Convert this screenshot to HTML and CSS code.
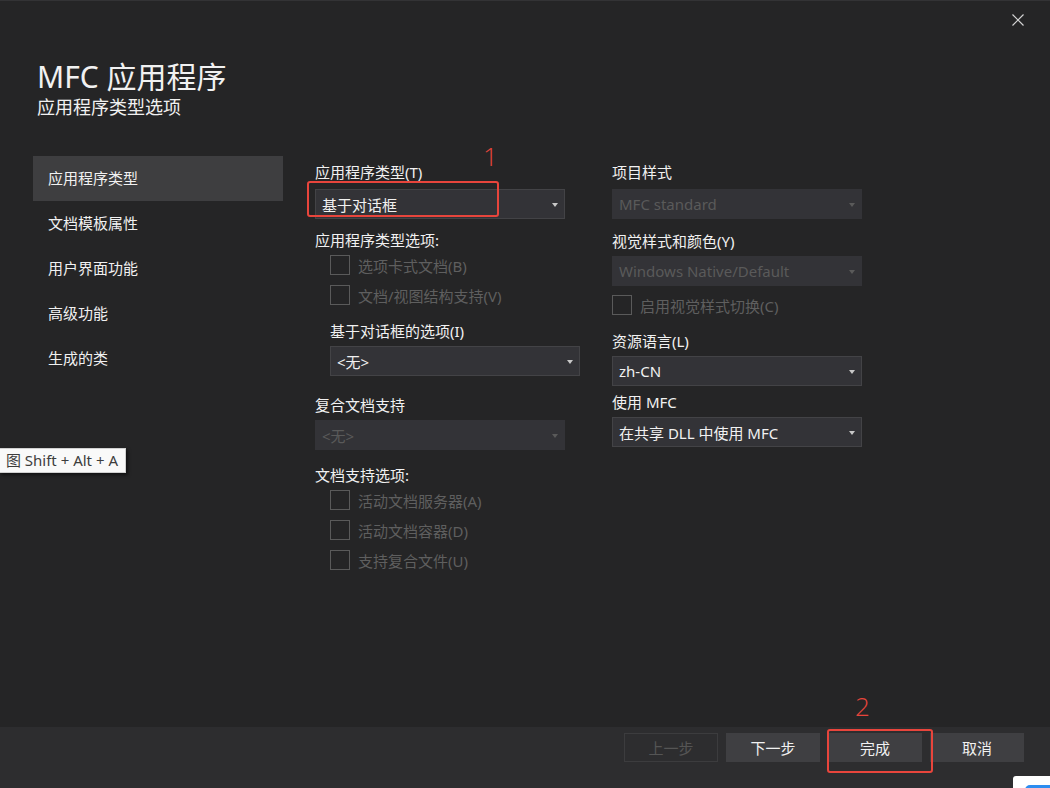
FILE: index.html
```html
<!DOCTYPE html>
<html lang="zh-CN">
<head>
    <meta charset="UTF-8">
    <meta name="viewport" content="width=device-width, initial-scale=1.0">
    <title>MFC 应用程序</title>
    <link rel="stylesheet" href="styles.css">
</head>
<body>
    <div class="dialog">
        <div class="header">
            <div class="titles">
                <h1>MFC 应用程序</h1>
                <h2>应用程序类型选项</h2>
            </div>
            <button class="close-btn" aria-label="关闭">
                <svg width="12" height="12" viewBox="0 0 12 12">
                    <path d="M0.5 0.5L11.5 11.5M11.5 0.5L0.5 11.5" stroke="#d4d4d4" stroke-width="1.2" fill="none"/>
                </svg>
            </button>
        </div>

        <div class="main">
            <ul class="nav">
                <li class="active">应用程序类型</li>
                <li>文档模板属性</li>
                <li>用户界面功能</li>
                <li>高级功能</li>
                <li>生成的类</li>
            </ul>

            <div class="column">
                <div class="group app-type">
                    <label class="label">应用程序类型(T)</label>
                    <div class="select">基于对话框</div>
                </div>
                <div class="group app-options">
                    <label class="label">应用程序类型选项:</label>
                    <div class="checks">
                        <div class="check indent"><span class="box"></span>选项卡式文档(B)</div>
                        <div class="check indent"><span class="box"></span>文档/视图结构支持(V)</div>
                    </div>
                </div>
                <div class="group dialog-options indent">
                    <label class="label">基于对话框的选项(I)</label>
                    <div class="select">&lt;无&gt;</div>
                </div>
                <div class="group compound">
                    <label class="label">复合文档支持</label>
                    <div class="select disabled">&lt;无&gt;</div>
                </div>
                <div class="group doc-options">
                    <label class="label">文档支持选项:</label>
                    <div class="checks">
                        <div class="check indent"><span class="box"></span>活动文档服务器(A)</div>
                        <div class="check indent"><span class="box"></span>活动文档容器(D)</div>
                        <div class="check indent"><span class="box"></span>支持复合文件(U)</div>
                    </div>
                </div>
            </div>

            <div class="column">
                <div class="group app-type">
                    <label class="label">项目样式</label>
                    <div class="select disabled">MFC standard</div>
                </div>
                <div class="group visual">
                    <label class="label">视觉样式和颜色(Y)</label>
                    <div class="select disabled">Windows Native/Default</div>
                </div>
                <div class="check visual-switch"><span class="box"></span>启用视觉样式切换(C)</div>
                <div class="group language">
                    <label class="label">资源语言(L)</label>
                    <div class="select">zh-CN</div>
                </div>
                <div class="group use-mfc">
                    <label class="label">使用 MFC</label>
                    <div class="select">在共享 DLL 中使用 MFC</div>
                </div>
            </div>
        </div>

        <div class="footer">
            <button class="btn" disabled>上一步</button>
            <button class="btn">下一步</button>
            <button class="btn">完成</button>
            <button class="btn">取消</button>
        </div>

        <!-- annotations drawn on the screenshot -->
        <div class="mark mark-1"></div>
        <div class="num num-1">1</div>
        <div class="mark mark-2"></div>
        <div class="num num-2">2</div>

        <div class="tooltip">图 Shift + Alt + A</div>
        <div class="corner-popup"><span></span></div>
    </div>
</body>
</html>
```

FILE: styles.css
```css
* {
    margin: 0;
    padding: 0;
    box-sizing: border-box;
}

body {
    background-color: #252526;
    color: #f1f1f1;
    font-family: "Noto Sans", "Noto Sans CJK SC", sans-serif;
    font-size: 15px;
    overflow: hidden;
}

.dialog {
    position: relative;
    width: 1050px;
    height: 788px;
    display: flex;
    flex-direction: column;
    background-color: #252526;
    border-top: 1px solid #333335;
    overflow: hidden;
}

/* header */
.header {
    display: flex;
    justify-content: space-between;
    align-items: flex-start;
    height: 155px;
    padding: 0 26px 0 37px;
}

.titles {
    padding-top: 58px;
}

h1 {
    font-size: 30px;
    font-weight: 400;
    line-height: 36px;
}

h2 {
    font-size: 18px;
    font-weight: 400;
    line-height: 24px;
}

.close-btn {
    width: 12px;
    height: 12px;
    margin-top: 13px;
    background: none;
    border: none;
    display: flex;
}

/* main area */
.main {
    flex: 1;
    display: grid;
    grid-template-columns: 250px 265px 250px;
    column-gap: 32px;
    align-content: start;
    padding-left: 33px;
}

.nav {
    list-style: none;
}

.nav li {
    height: 45px;
    line-height: 45px;
    padding-left: 15px;
}

.nav li.active {
    background-color: #3e3e40;
}

.column {
    display: flex;
    flex-direction: column;
}

.label {
    display: block;
    line-height: 20px;
    margin-bottom: 5px;
}

.indent {
    margin-left: 15px;
}

.app-type { margin-top: 6px; }
.app-type .label { margin-bottom: 7px; }
.app-options { margin-top: 11px; }
.dialog-options { margin-top: 16px; }
.compound { margin-top: 19px; }
.doc-options { margin-top: 15px; }
.visual { margin-top: 12px; }
.visual-switch { margin-top: 9px; }
.language { margin-top: 16px; }
.use-mfc { margin-top: 6px; }

.select {
    position: relative;
    width: 250px;
    height: 30px;
    display: flex;
    align-items: center;
    padding-left: 6px;
    background-color: #333337;
    border: 1px solid #434346;
}

.select::after {
    content: "";
    position: absolute;
    right: 6px;
    top: 13px;
    border-left: 3.5px solid transparent;
    border-right: 3.5px solid transparent;
    border-top: 4px solid #c8c8c8;
}

.select.disabled {
    border-color: #333337;
    color: #5a5a5a;
}

.select.disabled::after {
    border-top-color: #5a5a5a;
}

.checks {
    display: flex;
    flex-direction: column;
    gap: 10px;
    margin-top: 2px;
}

.check {
    display: flex;
    align-items: center;
    gap: 8px;
    height: 20px;
    color: #5f5f5f;
}

.box {
    width: 20px;
    height: 20px;
    border: 1px solid #5a5a5a;
}

/* footer */
.footer {
    height: 61px;
    display: flex;
    justify-content: flex-end;
    gap: 8px;
    padding: 6px 26px 0 0;
    background-color: #2d2d2f;
}

.btn {
    width: 94px;
    height: 29px;
    background-color: #3f3f42;
    border: 1px solid #3f3f42;
    color: #f1f1f1;
    font-family: inherit;
    font-size: 15px;
}

.btn:disabled {
    background-color: transparent;
    border-color: #3c3c3e;
    color: #555;
}

/* red annotations */
.mark {
    position: absolute;
    border: 2px solid #e8453c;
    border-radius: 3px;
}

.mark-1 {
    left: 307px;
    top: 180px;
    width: 192px;
    height: 36px;
}

.mark-2 {
    left: 827px;
    top: 728px;
    width: 106px;
    height: 44px;
}

.num {
    position: absolute;
    color: #e8453c;
    font-family: "Open Sans", sans-serif;
    font-weight: 300;
    font-size: 26px;
    line-height: 1;
}

.num-1 {
    left: 483px;
    top: 142px;
}

.num-2 {
    left: 855px;
    top: 692px;
}

/* floating bits */
.tooltip {
    position: absolute;
    right: 924px;
    top: 447px;
    height: 25px;
    padding: 0 7px 0 6px;
    line-height: 23px;
    white-space: nowrap;
    background-color: #f9f9f9;
    border: 1px solid #d0d0d0;
    color: #3d3d3d;
    box-shadow: 2px 2px 3px rgba(0, 0, 0, 0.5);
}

.corner-popup {
    position: absolute;
    left: 1013px;
    top: 775px;
    width: 40px;
    height: 16px;
    background-color: #fff;
    border-radius: 3px 0 0 0;
}

.corner-popup span {
    position: absolute;
    left: 12px;
    top: 9px;
    width: 32px;
    height: 10px;
    background-color: #2c8df0;
    border-radius: 5px;
}
```
